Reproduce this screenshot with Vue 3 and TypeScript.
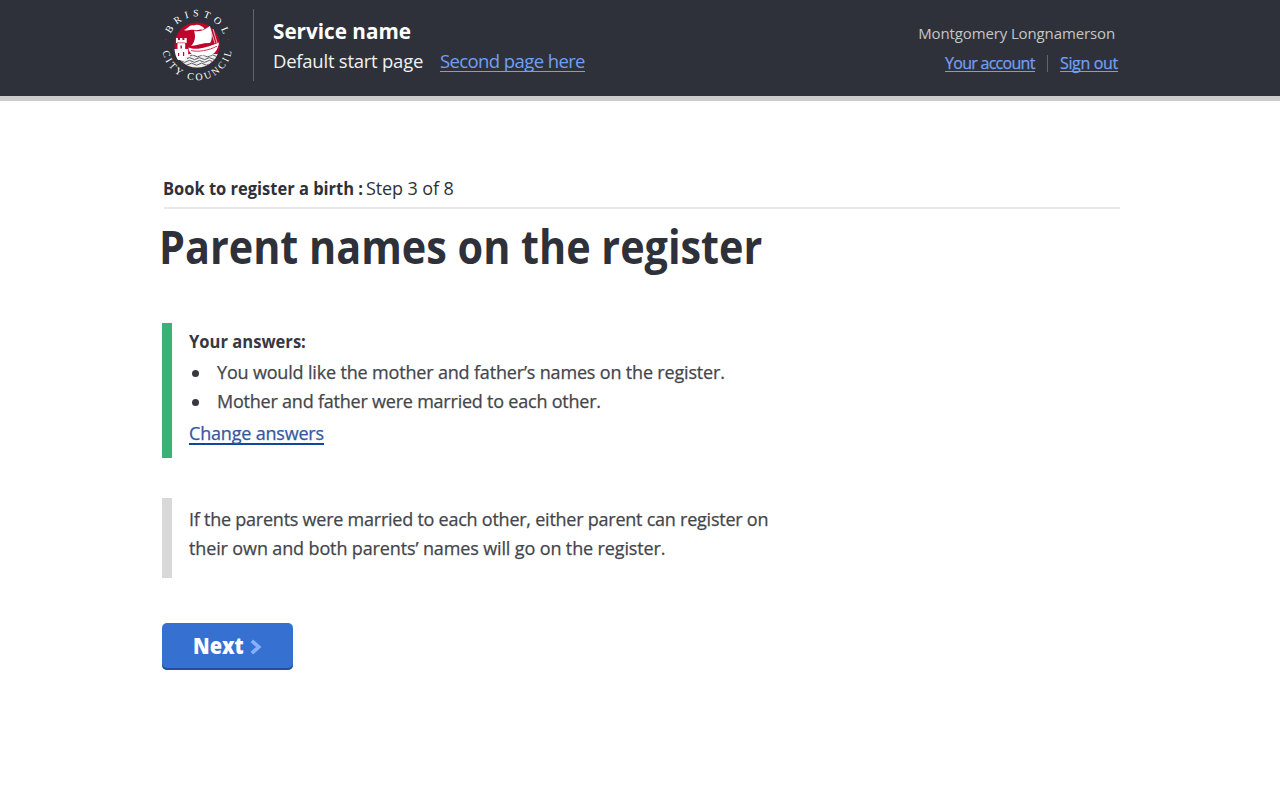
<script setup lang="ts">
interface Link {
  label: string
  kind: string
}

const accountLinks: Link[] = [
  { label: 'Your account', kind: 'account' },
  { label: 'Sign out', kind: 'signout' },
]

const answers: string[] = [
  'You would like the mother and father’s names on the register.',
  'Mother and father were married to each other.',
]
</script>

<template>
  <div class="page">
    <header class="header">
      <div class="container header-inner">
        <svg class="logo" viewBox="0 0 74 74" width="74" height="74" role="img" aria-label="Bristol City Council">
          <defs>
            <path id="ring-top" d="M8.5 37 A28.5 28.5 0 0 1 65.5 37" />
            <path id="ring-bottom" d="M3 28 A35.2 35.2 0 1 0 71 28" />
            <clipPath id="disc"><circle cx="37" cy="37" r="22.6" /></clipPath>
          </defs>
          <text class="ring top"><textPath href="#ring-top" startOffset="52.6%" text-anchor="middle">BRISTOL</textPath></text>
          <text class="ring bottom"><textPath href="#ring-bottom" startOffset="51.2%" text-anchor="middle">CITY COUNCIL</textPath></text>
          <circle cx="5.6" cy="31.6" r="0.9" fill="#b5082d" />
          <circle cx="68.4" cy="31.6" r="0.9" fill="#b5082d" />
          <circle cx="37" cy="37" r="22.6" fill="#c0032c" />
          <g clip-path="url(#disc)">
            <path d="M14 52 L22 47 L30 46 H60 V62 H14 Z" fill="#eef0ef" />
            <g fill="none" stroke="#4a4c52" stroke-width="0.9">
              <path d="M30 47.9 q2.5 -2 5 0 t5 0 t5 0 t5 0 t5 0 t5 0" />
              <path d="M27 50.6 q2.5 -2 5 0 t5 0 t5 0 t5 0 t5 0 t5 0" />
              <path d="M17 53.4 q2.5 -2 5 0 t5 0 t5 0 t5 0 t5 0 t5 0 t5 0" />
              <path d="M19 56.2 q2.5 -2 5 0 t5 0 t5 0 t5 0 t5 0 t5 0" />
            </g>
          </g>
          <path d="M16 30 h2 v2 h2 v-2 h2.4 v2 h2 v-2 h2.3 v5 h-1.5 v6 h3 v8 h-3 v3 H18 q-3 -4 -3.5 -11 h3 v-6 H16 Z" fill="#fff" />
          <path d="M20.5 37.5 h1.4 v3 h-1.4 Z M18 45 h1.2 v3 H18 Z M23 44 h1.2 v4 H23 Z" fill="#c0032c" />
          <path d="M17 34.8 h8.5" stroke="#c0032c" stroke-width="0.6" />
          <path d="M24 22 C28 21 29.5 16.5 33.5 17.5 C38 15.5 42 18 44.5 20.5 L43 21.8 C39 20.5 37 23 34 22 C31 21 28 23.5 24 22 Z" fill="#fff" />
          <path d="M34 23 C39 24 45 22 49.5 18.2 C52 24 53 31 50 35 C44 34.5 38 37 31 38 C35 34 36 28 34 23 Z" fill="#fff" />
          <path d="M28.5 39.5 C36 42.5 46 40 59 34.5 C58 42 54 46.5 50 47.5 L33 47 C30 45 28.5 43 28.5 39.5 Z" fill="#fff" />
          <path d="M53 21 L57 35 M49.5 18.2 L55 35.5" stroke="#fff" stroke-width="0.7" />
          <path d="M31 42.6 C39 44.2 48 42.6 57 38.2" fill="none" stroke="#c0032c" stroke-width="0.8" />
        </svg>
        <div class="service">
          <div class="service-name"><span>Service name</span></div>
          <nav class="service-nav">
            <span class="start">Default start page</span>
            <a class="second">Second page here</a>
          </nav>
        </div>
        <div class="user">
          <div class="user-name">Montgomery Longnamerson</div>
          <div class="user-links">
            <a v-for="link in accountLinks" :key="link.label" :class="link.kind">{{ link.label }}</a>
          </div>
        </div>
      </div>
    </header>

    <main class="container main">
      <div class="step">
        <strong><span>Book to register a birth :</span></strong><span class="count">Step 3 of 8</span>
      </div>
      <h1><span>Parent names on the register</span></h1>

      <section class="panel answers">
        <h2><span>Your answers:</span></h2>
        <ul>
          <li v-for="answer in answers" :key="answer">{{ answer }}</li>
        </ul>
        <a class="change">Change answers</a>
      </section>

      <section class="panel note">
        If the parents were married to each other, either parent can register on<br />
        <span>their own and both parents’ names will go on the register.</span>
      </section>

      <button class="next" type="button">
        <span class="next-label">Next</span>
        <svg width="12" height="16" viewBox="0 0 12 16">
          <path d="M1.8 1.8 L8.8 8 L1.8 14.2" fill="none" stroke="#85b0ff" stroke-width="3.6" />
        </svg>
      </button>
    </main>
  </div>
</template>

<style>
body {
  margin: 0;
  background: #fff;
}
</style>

<style scoped>
.page {
  min-height: 799px;
  font-family: 'Open Sans', 'Noto Sans', sans-serif;
  color: #43464b;
  white-space: nowrap;
}
.container {
  width: 956px;
  margin: 0 auto;
}
.header {
  box-sizing: border-box;
  height: 101px;
  background: #2e3139;
  border-bottom: 5px solid #cbcbca;
}
.header-inner {
  display: flex;
  align-items: flex-start;
}
.logo {
  margin: 8px 0 0 -2px;
  overflow: visible;
}
.ring {
  font-family: 'Liberation Serif', serif;
  font-size: 10px;
  fill: #fff;
}
.top {
  letter-spacing: 4.3px;
}
.bottom {
  letter-spacing: 2.5px;
}
.service {
  margin: 9px 0 0 19px;
  height: 72px;
  padding-left: 19px;
  border-left: 1px solid #62656c;
}
.service-name {
  height: 30px;
  padding-top: 6px;
  line-height: 30px;
  font-size: 22px;
  font-weight: 700;
  color: #fff;
}
.service-name span,
.step strong span,
h1 span,
h2 span,
.next-label {
  display: inline-block;
  transform-origin: 0 50%;
}
.service-name span {
  transform: scaleX(0.94);
}
.service-nav {
  display: flex;
  font-size: 18.5px;
  line-height: 25px;
  padding-top: 3px;
}
.start {
  width: 167px;
  color: #f2f2f2;
  letter-spacing: -0.24px;
}
.service-nav a,
.user-links a {
  color: #719ff5;
  border-bottom: 1px solid #719ff5;
}
.second {
  height: 23px;
  width: 145px;
  letter-spacing: -0.6px;
}
.user {
  margin-left: auto;
  display: flex;
  flex-direction: column;
  align-items: flex-end;
}
.user-name {
  margin: 21px 3px 0 0;
  line-height: 24px;
  font-size: 15px;
  color: #c6c6c6;
  letter-spacing: -0.12px;
}
.user-links {
  display: flex;
  margin-top: 8px;
  font-size: 16px;
  line-height: 21px;
  -webkit-text-stroke: 0.25px #719ff5;
}
.user-links a {
  height: 18px;
}
.account {
  width: 90px;
  letter-spacing: -0.72px;
}
.signout {
  position: relative;
  width: 58px;
  margin-left: 25px;
  letter-spacing: -0.35px;
}
.signout::before {
  content: '';
  position: absolute;
  left: -13px;
  top: 2px;
  width: 1px;
  height: 17px;
  background: #62656c;
}
.main {
  padding-top: 73px;
}
.step {
  display: flex;
  height: 33px;
  margin-left: 2px;
  margin-right: -2px;
  border-bottom: 2px solid #e8e8e8;
  line-height: 29px;
  font-size: 18px;
  color: #2e3139;
}
.step strong {
  width: 203px;
  margin-left: -1px;
}
.step strong span {
  transform: scaleX(0.915);
}
.count {
  letter-spacing: -0.1px;
}
h1 {
  margin: 3px 0 0 -3px;
  line-height: 68px;
  font-size: 46px;
  color: #2e3139;
}
h1 span {
  transform: scaleX(0.899);
}
.panel {
  box-sizing: border-box;
  border-left: 10px solid #3cb176;
  padding-left: 17px;
  font-size: 18px;
  -webkit-text-stroke: 0.25px currentColor;
}
.answers {
  height: 135px;
  margin-top: 43px;
  padding-top: 3px;
}
h2 {
  margin: 0;
  font-size: 18px;
  line-height: 30px;
  color: #37393e;
  -webkit-text-stroke: 0;
}
h2 span {
  transform: scaleX(0.92);
}
ul {
  margin: 2px 0 0;
  padding: 0;
  list-style: none;
}
li {
  display: flex;
  align-items: center;
  line-height: 29px;
  letter-spacing: -0.17px;
}
li:last-child {
  letter-spacing: -0.22px;
}
li::before {
  content: '';
  width: 7px;
  height: 7px;
  margin: 2px 18px 0 3px;
  border-radius: 50%;
  background: #37393e;
}
.change {
  display: block;
  width: 135px;
  height: 22px;
  margin-top: 5px;
  line-height: 25px;
  border-bottom: 2px solid #10489e;
  letter-spacing: -0.19px;
  color: #3259a0;
}
.note {
  height: 80px;
  margin-top: 40px;
  padding-top: 7px;
  border-color: #d8d8d8;
  line-height: 29px;
  letter-spacing: -0.24px;
}
.note span {
  letter-spacing: -0.13px;
}
.next {
  display: flex;
  align-items: center;
  width: 131px;
  height: 47px;
  margin-top: 45px;
  padding: 0 0 0 31px;
  border: 0;
  border-radius: 5px;
  background: #3670d0;
  box-shadow: inset 0 -2px 0 #23509c;
  font-family: inherit;
  color: #fff;
}
.next-label {
  width: 57px;
  margin-top: -3px;
  text-align: left;
  font-size: 23.5px;
  line-height: 46px;
  font-weight: 800;
  transform: scaleX(0.85);
}
</style>
